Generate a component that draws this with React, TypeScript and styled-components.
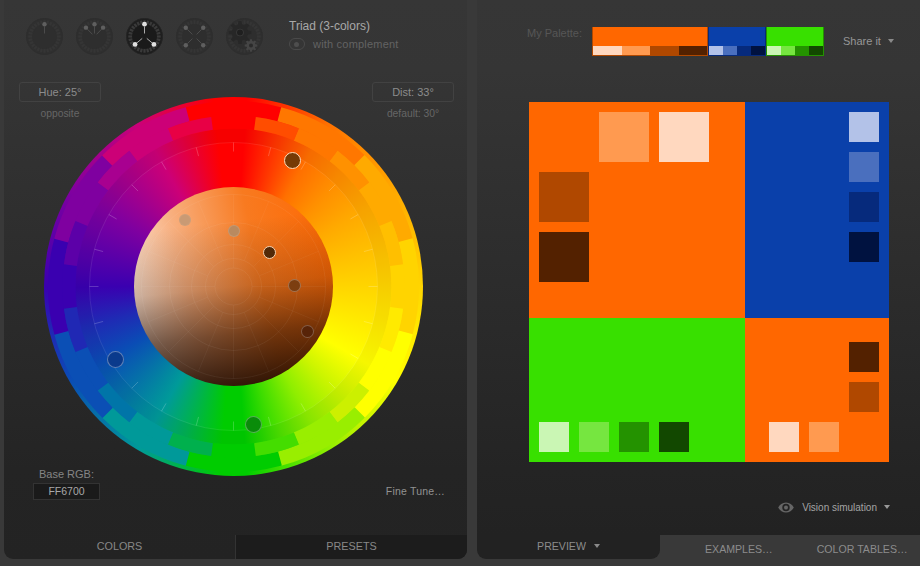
import styled, { createGlobalStyle } from "styled-components";

const GlobalStyle = createGlobalStyle`
  html, body {
    margin: 0;
    padding: 0;
    width: 920px;
    height: 566px;
    overflow: hidden;
    background: #393939;
    font-family: "Liberation Sans", Arial, sans-serif;
  }
`;

const PANEL_BG = "linear-gradient(#363636 0, #353535 70px, #242424 470px, #232323 100%)";

const Page = styled.div`
  display: grid;
  grid-template-columns: 463px 443px;
  column-gap: 10px;
  padding-left: 4px;
  width: 920px;
  height: 566px;
  box-sizing: border-box;
`;

const LeftPanel = styled.section`
  display: flex;
  flex-direction: column;
  height: 559px;
  border-radius: 0 0 9px 9px;
  overflow: hidden;
  background: ${PANEL_BG};
`;

const Toolbar = styled.div`
  display: flex;
  height: 82px;
  box-sizing: border-box;
  padding: 18px 0 0 22px;
  flex-shrink: 0;
`;

const Dials = styled.div`
  display: flex;
  gap: 13px;
  height: 37px;
`;

const HarmonyInfo = styled.div`
  margin-left: 26px;
  margin-top: 1px;
`;

const HarmonyTitle = styled.div`
  font-size: 12px;
  line-height: 14px;
  color: #a8a8a8;
`;

const ComplementRow = styled.div`
  display: flex;
  align-items: center;
  gap: 8px;
  margin-top: 4px;
  font-size: 11px;
  line-height: 14px;
  color: #636363;
  letter-spacing: 0.2px;
`;

const Toggle = styled.span`
  display: flex;
  align-items: center;
  width: 16px;
  height: 12px;
  box-sizing: border-box;
  padding-left: 4px;
  border: 1px solid #4a4a4a;
  border-radius: 6px;

  &::before {
    content: "";
    width: 5px;
    height: 5px;
    border-radius: 50%;
    background: #4e4e4e;
  }
`;

const ValueRow = styled.div`
  display: flex;
  justify-content: space-between;
  height: 40px;
  margin-bottom: -25px;
  padding: 0 13px 0 15px;
  flex-shrink: 0;
`;

const ValueGroup = styled.div`
  width: 82px;
  text-align: center;
`;

const ValueBox = styled.div`
  height: 20px;
  box-sizing: border-box;
  border: 1px solid #424242;
  border-radius: 3px;
  font-size: 11px;
  line-height: 18px;
  color: #8c8c8c;
`;

const ValueCaption = styled.div`
  margin-top: 5px;
  font-size: 10.3px;
  line-height: 14px;
  color: #666;
`;

const Wheel = styled.div`
  position: relative;
  width: 379px;
  height: 379px;
  margin-left: 40px;
  flex-shrink: 0;
  border-radius: 50%;
  background: conic-gradient(
    #ff0000 0deg,
    #ff0000 4deg,
    #ff7000 30deg,
    #ff9000 45deg,
    #ffaa00 60deg,
    #ffd500 90deg,
    #ffff00 120deg,
    #ccf500 135deg,
    #8fee00 150deg,
    #3fdd00 165deg,
    #00cc00 176deg,
    #00cc00 184deg,
    #009a99 210deg,
    #0a4db5 240deg,
    #1f2ab4 255deg,
    #3a00b0 270deg,
    #7f00a0 300deg,
    #cc0077 330deg,
    #ff0000 354deg
  );
`;

const WheelArt = styled.svg`
  position: absolute;
  inset: 0;
`;

const Disc = styled.div`
  position: absolute;
  left: 90px;
  top: 90px;
  width: 199px;
  height: 199px;
  border-radius: 50%;
  overflow: hidden;
  background:
    linear-gradient(174deg, rgba(30, 10, 0, 0) 20%, rgba(30, 10, 0, 0.22) 50%, rgba(30, 10, 0, 0.6) 72%, rgba(30, 10, 0, 0.97) 100%),
    linear-gradient(78deg, #fff4ec 0%, #f8b080 30%, #f87a20 62%, #ff6700 100%);
`;

const DiscGrid = styled.svg`
  position: absolute;
  inset: 0;
`;

const Marker = styled.div<{ $x: number; $y: number; $size: number; $fill: string; $ring: string; $width: number }>`
  position: absolute;
  left: ${(p) => p.$x - p.$size / 2}px;
  top: ${(p) => p.$y - p.$size / 2}px;
  width: ${(p) => p.$size}px;
  height: ${(p) => p.$size}px;
  box-sizing: border-box;
  border-radius: 50%;
  background: ${(p) => p.$fill};
  border: ${(p) => p.$width}px solid ${(p) => p.$ring};
`;

const LeftFooter = styled.div`
  display: flex;
  justify-content: space-between;
  align-items: flex-end;
  margin-top: -9px;
  padding: 0 22px 0 29px;
`;

const BaseGroup = styled.div`
  width: 67px;
  text-align: center;
`;

const BaseLabel = styled.div`
  font-size: 11px;
  line-height: 14px;
  color: #858585;
  white-space: nowrap;
`;

const BaseInput = styled.div`
  height: 17px;
  margin-top: 2px;
  box-sizing: border-box;
  background: #1a1a1a;
  border: 1px solid #333;
  font-size: 10.5px;
  line-height: 15px;
  color: #a8a8a8;
`;

const FineTune = styled.div`
  font-size: 10.5px;
  line-height: 14px;
  color: #929292;
  letter-spacing: 0.2px;
  margin-bottom: 2px;
`;

const TabBar = styled.div`
  display: grid;
  grid-template-columns: 231px 1fr;
  height: 24px;
  margin-top: auto;
  font-size: 10.8px;
  line-height: 22px;
  text-align: center;
  color: #888;
`;

const Tab = styled.div<{ $active?: boolean }>`
  background: ${(p) => (p.$active ? "transparent" : "#1c1c1c")};
  border-left: ${(p) => (p.$active ? "0" : "1px solid #333")};
`;

const RightColumn = styled.div`
  display: flex;
  flex-direction: column;
  height: 559px;
`;

const RightPanel = styled.section`
  display: flex;
  flex-direction: column;
  height: 535px;
  flex-shrink: 0;
  background: linear-gradient(#363636 0, #353535 70px, #242424 470px, #222 100%);
`;

const PaletteBar = styled.div`
  display: flex;
  height: 102px;
  box-sizing: border-box;
  padding: 27px 0 0 50px;
  flex-shrink: 0;
`;

const PaletteLabel = styled.div`
  width: 65px;
  font-size: 11px;
  line-height: 12px;
  color: #565656;
`;

const Swatch = styled.div<{ $width: number; $color: string; $edge: string }>`
  display: flex;
  flex-direction: column;
  justify-content: flex-end;
  width: ${(p) => p.$width}px;
  height: 29px;
  box-sizing: border-box;
  background: ${(p) => p.$color};
  border-bottom: 1px solid ${(p) => p.$edge};
  border-left: 1px solid ${(p) => p.$edge};
  border-right: 1px solid ${(p) => p.$edge};
`;

const SwatchStrip = styled.div`
  display: flex;
  height: 9px;
`;

const StripCell = styled.div<{ $color: string }>`
  flex: 1;
  background: ${(p) => p.$color};
`;

const ShareIt = styled.div`
  display: flex;
  align-items: center;
  gap: 7px;
  height: 28px;
  margin-left: 19px;
  font-size: 11px;
  color: #979797;
`;

const Caret = styled.span<{ $color?: string }>`
  width: 0;
  height: 0;
  border-left: 3.5px solid transparent;
  border-right: 3.5px solid transparent;
  border-top: 4px solid ${(p) => p.$color ?? "#8a8a8a"};
`;

const Preview = styled.div`
  display: grid;
  grid-template-columns: 216px 144px;
  grid-template-rows: 216px 144px;
  width: 360px;
  margin-left: 52px;
  flex-shrink: 0;
`;

const BigTile = styled.div<{ $color: string }>`
  display: grid;
  grid-template-columns: repeat(3, 50px);
  grid-template-rows: repeat(3, 50px);
  gap: 10px;
  padding: 10px;
  box-sizing: border-box;
  background: ${(p) => p.$color};
`;

const SideTile = styled.div<{ $color: string }>`
  display: flex;
  flex-direction: column;
  align-items: flex-end;
  gap: 10px;
  padding: 10px;
  box-sizing: border-box;
  background: ${(p) => p.$color};
`;

const RowTile = styled.div<{ $color: string }>`
  display: flex;
  align-items: flex-end;
  gap: 10px;
  padding: 10px;
  box-sizing: border-box;
  background: ${(p) => p.$color};
`;

const CornerTile = styled.div<{ $color: string }>`
  display: grid;
  grid-template-columns: repeat(3, 30px);
  grid-template-rows: repeat(3, 30px);
  gap: 10px;
  justify-content: end;
  align-content: end;
  padding: 10px;
  box-sizing: border-box;
  background: ${(p) => p.$color};
`;

const Chip = styled.div<{ $color: string; $size: number; $col?: number; $row?: number }>`
  width: ${(p) => p.$size}px;
  height: ${(p) => p.$size}px;
  background: ${(p) => p.$color};
  grid-column: ${(p) => p.$col ?? "auto"};
  grid-row: ${(p) => p.$row ?? "auto"};
`;

const VisionRow = styled.div`
  display: flex;
  align-items: center;
  justify-content: flex-end;
  gap: 7px;
  margin-top: 38px;
  padding-right: 30px;
  height: 14px;
  font-size: 10px;
  color: #a4a4a4;
`;

const EyeSvg = styled.svg`
  margin-right: 1px;
`;

const BottomTabs = styled.div`
  display: flex;
  height: 24px;
  font-size: 10.6px;
  color: #8c8c8c;
`;

const PreviewTab = styled.div`
  display: flex;
  align-items: center;
  justify-content: center;
  gap: 8px;
  width: 183px;
  padding-bottom: 2px;
  box-sizing: border-box;
  background: #222;
  border-radius: 0 0 9px 9px;
`;

const PlainTab = styled.div<{ $offset: number }>`
  margin-left: ${(p) => p.$offset}px;
  line-height: 28px;
  white-space: nowrap;
`;

const CX = 189.5;
const polar = (r: number, deg: number): [number, number] => {
  const a = (deg * Math.PI) / 180;
  return [CX + r * Math.sin(a), CX - r * Math.cos(a)];
};

const bandPath = (r1: number, r2: number, from: number, to: number) => {
  const [ax, ay] = polar(r2, from);
  const [bx, by] = polar(r2, to);
  const [cx, cy] = polar(r1, to);
  const [dx, dy] = polar(r1, from);
  return `M${ax} ${ay}A${r2} ${r2} 0 0 1 ${bx} ${by}L${cx} ${cy}A${r1} ${r1} 0 0 0 ${dx} ${dy}Z`;
};

const SECTORS = ["#ff0000", "#ff7700", "#ffaa00", "#ffd400", "#ffff00", "#99ee00", "#00cc00", "#009999", "#0b4fb5", "#3a00b0", "#7f00a0", "#cc0077"];
const TEETH = ["#ff4d00", "#ff9100", "#ffbf00", "#ffea00", "#ccf000", "#44dd00", "#00b04d", "#0075a8", "#2028b4", "#5c00a8", "#a80090", "#e80045"];

const WheelDrawing = () => (
  <WheelArt width={379} height={379} viewBox="0 0 379 379">
    <circle cx={CX} cy={CX} r={151} fill="none" stroke="rgba(0,0,0,0.035)" strokeWidth={14} />
    {SECTORS.map((c, i) => (
      <path key={c} d={bandPath(171, 185.5, i * 30 - 15.1, i * 30 + 15.1)} fill={c} />
    ))}
    {SECTORS.map((c, i) => (
      <path key={c} d={bandPath(158, 171.5, i * 30 - 7.6, i * 30 + 7.6)} fill={c} />
    ))}
    {TEETH.map((c, i) => (
      <path key={c} d={bandPath(158, 171, i * 30 + 7.5, i * 30 + 22.5)} fill={c} />
    ))}
    <circle cx={CX} cy={CX} r={144} fill="none" stroke="rgba(255,255,255,0.09)" />
    {Array.from({ length: 24 }, (_, i) => {
      const [x1, y1] = polar(144, i * 15);
      const [x2, y2] = polar(135, i * 15);
      return <line key={i} x1={x1} y1={y1} x2={x2} y2={y2} stroke="rgba(255,255,255,0.2)" />;
    })}
  </WheelArt>
);

const DiscLines = () => (
  <DiscGrid width={199} height={199} viewBox="0 0 199 199">
    {[18.5, 28, 42, 64, 92].map((r) => (
      <circle key={r} cx={99.5} cy={99.5} r={r} fill="none" stroke="rgba(255,255,255,0.06)" />
    ))}
    {Array.from({ length: 16 }, (_, i) => {
      const a = (i * 22.5 * Math.PI) / 180;
      const from = i % 4 === 0 ? 18.5 : 28;
      return (
        <line
          key={i}
          x1={99.5 + from * Math.sin(a)}
          y1={99.5 - from * Math.cos(a)}
          x2={99.5 + 92 * Math.sin(a)}
          y2={99.5 - 92 * Math.cos(a)}
          stroke="rgba(255,255,255,0.045)"
        />
      );
    })}
  </DiscGrid>
);

const gearPath = (cx: number, cy: number, outer: number, inner: number, teeth: number) => {
  const pts: string[] = [];
  const step = 360 / teeth;
  for (let i = 0; i < teeth; i++) {
    const base = i * step;
    [
      [inner, base - step * 0.32],
      [outer, base - step * 0.18],
      [outer, base + step * 0.18],
      [inner, base + step * 0.32],
    ].forEach(([r, d]) => {
      const a = (d * Math.PI) / 180;
      pts.push(`${(cx + r * Math.sin(a)).toFixed(2)} ${(cy - r * Math.cos(a)).toFixed(2)}`);
    });
  }
  return `M${pts.join("L")}Z`;
};

const Dial = ({ angles = [], active, gear }: { angles?: number[]; active?: boolean; gear?: boolean }) => {
  const dot = active ? "#e0e0e0" : "#5f5f5f";
  const line = active ? "#bbbbbb" : "#4f4f4f";
  const at = (r: number, deg: number) => {
    const a = (deg * Math.PI) / 180;
    return { x: 18.5 + r * Math.sin(a), y: 18.5 - r * Math.cos(a) };
  };
  return (
    <svg width={37} height={37} viewBox="0 0 37 37">
      <circle cx={18.5} cy={18.5} r={18} fill={active ? "#1e1e1e" : "#2f2f2f"} stroke={active ? "#242424" : "#2e2e2e"} />
      {Array.from({ length: 28 }, (_, i) => {
        const a = at(12.5, i * (360 / 28));
        const b = at(16.2, i * (360 / 28));
        return <line key={i} x1={a.x} y1={a.y} x2={b.x} y2={b.y} stroke={active ? "#3a3a3a" : "#353535"} strokeWidth={2.2} />;
      })}
      <circle cx={18.5} cy={18.5} r={11.8} fill={active ? "#1a1a1a" : "#2e2e2e"} />
      {angles.map((d) => {
        const a = at(3, d);
        const b = at(10, d);
        const c = at(12.3, d);
        return (
          <g key={d}>
            <line x1={a.x} y1={a.y} x2={b.x} y2={b.y} stroke={line} strokeWidth={0.9} />
            <circle cx={c.x} cy={c.y} r={active ? 2.4 : 2.2} fill={dot} />
          </g>
        );
      })}
      {gear && (
        <>
          <path d={gearPath(14, 14.5, 11.5, 8.2, 8)} fill="#272727" />
          <circle cx={14} cy={14.5} r={3.8} fill="#3a3a3a" />
          <circle cx={14} cy={14.5} r={3} fill="#1f1f1f" />
          <path d={gearPath(25, 27.5, 6.4, 4.6, 8)} fill="#454545" />
          <circle cx={25} cy={27.5} r={2} fill="#2a2a2a" />
        </>
      )}
    </svg>
  );
};

const EyeIcon = () => (
  <EyeSvg width={16} height={11} viewBox="0 0 16 11">
    <path
      d="M8 0.5C4.4 0.5 1.6 2.8 0.2 5.5 1.6 8.2 4.4 10.5 8 10.5s6.4-2.3 7.8-5C14.4 2.8 11.6 0.5 8 0.5zM8 9.2a3.7 3.7 0 1 1 0-7.4 3.7 3.7 0 0 1 0 7.4z"
      fill="#666"
    />
    <circle cx={8} cy={5.5} r={2} fill="#666" />
  </EyeSvg>
);

const ORANGE = ["#ffd8bf", "#ff9a50", "#b04800", "#532100"];
const BLUE = ["#b3c2e8", "#4a6fbe", "#062a7c", "#001240"];
const GREEN = ["#caf6b4", "#76e640", "#249200", "#124800"];

export default function App() {
  return (
    <>
      <GlobalStyle />
      <Page>
        <LeftPanel>
          <Toolbar>
            <Dials>
              <Dial angles={[0]} />
              <Dial angles={[-44, 0, 44]} />
              <Dial angles={[0, 130, -130]} active />
              <Dial angles={[45, 135, -135, -45]} />
              <Dial gear />
            </Dials>
            <HarmonyInfo>
              <HarmonyTitle>Triad (3-colors)</HarmonyTitle>
              <ComplementRow>
                <Toggle />
                with complement
              </ComplementRow>
            </HarmonyInfo>
          </Toolbar>
          <ValueRow>
            <ValueGroup>
              <ValueBox>Hue: 25°</ValueBox>
              <ValueCaption>opposite</ValueCaption>
            </ValueGroup>
            <ValueGroup>
              <ValueBox>Dist: 33°</ValueBox>
              <ValueCaption>default: 30°</ValueCaption>
            </ValueGroup>
          </ValueRow>
          <Wheel>
            <WheelDrawing />
            <Disc>
              <DiscLines />
            </Disc>
            <Marker $x={248} $y={63.5} $size={17} $fill="#763a05" $ring="#ffdcbc" $width={1} />
            <Marker $x={71.5} $y={262} $size={17} $fill="#0a3a8c" $ring="rgba(255,255,255,0.35)" $width={1} />
            <Marker $x={209.5} $y={327.5} $size={17} $fill="#0a8c0a" $ring="rgba(255,255,255,0.3)" $width={1} />
            <Marker $x={140.5} $y={123} $size={12} $fill="#c99a74" $ring="rgba(255,255,255,0.05)" $width={1} />
            <Marker $x={189.5} $y={133.5} $size={12} $fill="#b98a60" $ring="rgba(255,255,255,0.12)" $width={1} />
            <Marker $x={225.5} $y={155.5} $size={13} $fill="#532a08" $ring="#f5d4b4" $width={1} />
            <Marker $x={250.5} $y={188} $size={13} $fill="#7c3e10" $ring="rgba(255,255,255,0.28)" $width={1} />
            <Marker $x={263.5} $y={234.5} $size={13} $fill="#582408" $ring="rgba(255,255,255,0.25)" $width={1} />
          </Wheel>
          <LeftFooter>
            <BaseGroup>
              <BaseLabel>Base RGB:</BaseLabel>
              <BaseInput>FF6700</BaseInput>
            </BaseGroup>
            <FineTune>Fine Tune…</FineTune>
          </LeftFooter>
          <TabBar>
            <Tab $active>COLORS</Tab>
            <Tab>PRESETS</Tab>
          </TabBar>
        </LeftPanel>
        <RightColumn>
          <RightPanel>
            <PaletteBar>
              <PaletteLabel>My Palette:</PaletteLabel>
              <Swatch $width={116} $color="#ff6700" $edge="#b04800">
                <SwatchStrip>
                  {ORANGE.map((c) => (
                    <StripCell key={c} $color={c} />
                  ))}
                </SwatchStrip>
              </Swatch>
              <Swatch $width={58} $color="#0a40aa" $edge="#062a7c">
                <SwatchStrip>
                  {BLUE.map((c) => (
                    <StripCell key={c} $color={c} />
                  ))}
                </SwatchStrip>
              </Swatch>
              <Swatch $width={58} $color="#38e000" $edge="#249200">
                <SwatchStrip>
                  {GREEN.map((c) => (
                    <StripCell key={c} $color={c} />
                  ))}
                </SwatchStrip>
              </Swatch>
              <ShareIt>
                Share it
                <Caret />
              </ShareIt>
            </PaletteBar>
            <Preview>
              <BigTile $color="#ff6700">
                <Chip $size={50} $color={ORANGE[1]} $col={2} $row={1} />
                <Chip $size={50} $color={ORANGE[0]} $col={3} $row={1} />
                <Chip $size={50} $color={ORANGE[2]} $col={1} $row={2} />
                <Chip $size={50} $color={ORANGE[3]} $col={1} $row={3} />
              </BigTile>
              <SideTile $color="#0a40aa">
                {BLUE.map((c) => (
                  <Chip key={c} $size={30} $color={c} />
                ))}
              </SideTile>
              <RowTile $color="#38e000">
                {GREEN.map((c) => (
                  <Chip key={c} $size={30} $color={c} />
                ))}
              </RowTile>
              <CornerTile $color="#ff6700">
                <Chip $size={30} $color={ORANGE[3]} $col={3} $row={1} />
                <Chip $size={30} $color={ORANGE[2]} $col={3} $row={2} />
                <Chip $size={30} $color={ORANGE[0]} $col={1} $row={3} />
                <Chip $size={30} $color={ORANGE[1]} $col={2} $row={3} />
              </CornerTile>
            </Preview>
            <VisionRow>
              <EyeIcon />
              Vision simulation
              <Caret $color="#999" />
            </VisionRow>
          </RightPanel>
          <BottomTabs>
            <PreviewTab>
              PREVIEW
              <Caret />
            </PreviewTab>
            <PlainTab $offset={45}>EXAMPLES…</PlainTab>
            <PlainTab $offset={44}>COLOR TABLES…</PlainTab>
          </BottomTabs>
        </RightColumn>
      </Page>
    </>
  );
}
